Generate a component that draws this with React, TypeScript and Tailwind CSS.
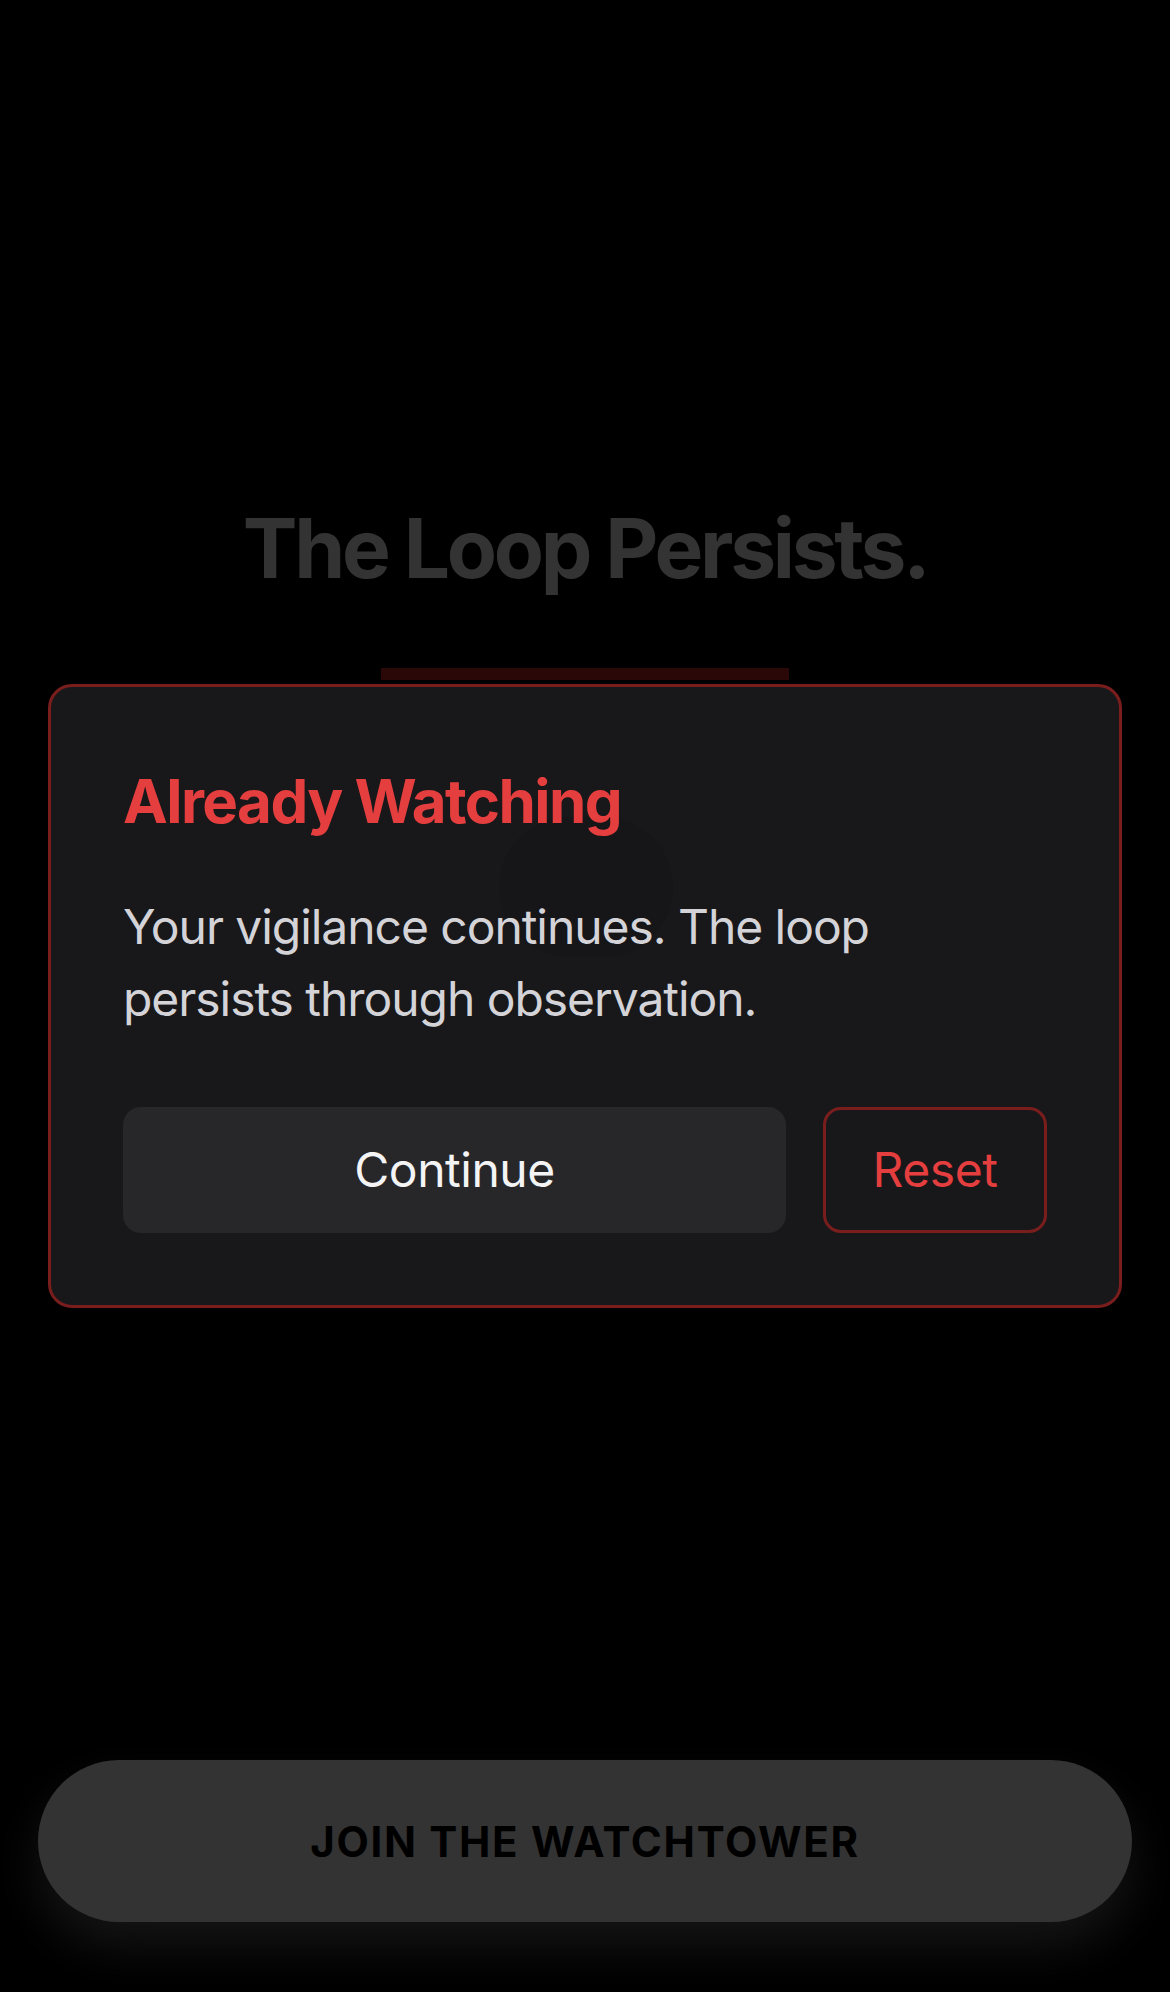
export default function App() {
  return (
    <div className="relative flex h-[1992px] w-[1170px] flex-col items-center overflow-hidden bg-black font-['Inter','Liberation_Sans',sans-serif]">
      {/* background screen, dimmed */}
      <h1 className="mt-[508px] text-[82px] font-bold leading-none tracking-[-0.04em] text-[#333333]">
        The Loop Persists.
      </h1>
      <div className="mt-[78px] h-[12px] w-[408px] bg-[#2b0808]" />
      <div className="flex-1" />
      <button className="mx-[38px] mb-[70px] flex h-[162px] w-[1094px] items-center justify-center rounded-full bg-[#333333] text-[42px] font-bold tracking-[0.04em] text-black shadow-[0_24px_48px_rgba(70,70,70,0.3)]">
        JOIN THE WATCHTOWER
      </button>

      {/* modal */}
      <div className="absolute inset-0 flex items-center justify-center px-[48px]">
        <div className="relative w-full overflow-hidden rounded-[24px] border-[3px] border-[#7a1d1d] bg-[#18181b] px-[72px] py-[72px]">
          <div className="absolute left-[448px] top-[130px] h-[140px] w-[174px] rounded-full bg-[#161619]" />
          <h2 className="relative text-[60px] font-bold leading-[84px] tracking-[-0.026em] text-[#e53e3e]">
            Already Watching
          </h2>
          <p className="relative mt-[48px] text-[48px] leading-[72px] tracking-[-0.022em] text-[#d4d4d8]">
            Your vigilance continues. The loop
            <br />
            persists through observation.
          </p>
          <div className="relative mt-[72px] flex gap-[37px]">
            <button className="h-[126px] flex-1 rounded-[18px] bg-[#27272a] text-[48px] tracking-[-0.01em] text-[#f4f4f5]">
              Continue
            </button>
            <button className="h-[126px] w-[224px] rounded-[18px] border-[3px] border-[#7a1d1d] text-[48px] tracking-[-0.01em] text-[#e53e3e]">
              Reset
            </button>
          </div>
        </div>
      </div>
    </div>
  )
}
